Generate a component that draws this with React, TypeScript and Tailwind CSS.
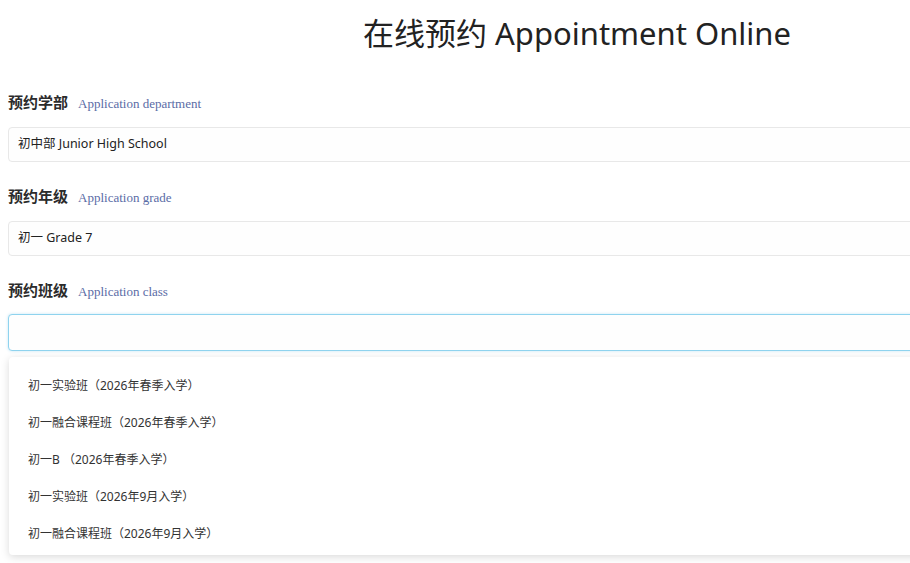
const FONT = 'font-["Noto_Sans","Noto_Sans_CJK_SC",sans-serif]';

const CLASSES = [
    '初一实验班（2026年春季入学）',
    '初一融合课程班（2026年春季入学）',
    '初一B （2026年春季入学）',
    '初一实验班（2026年9月入学）',
    '初一融合课程班（2026年9月入学）',
];

function Label({ cn, en }: { cn: string; en: string }) {
    return (
        <div className="flex h-[22px] items-baseline gap-[10px]">
            <span className={`${FONT} text-[15px] font-bold text-[#2b2b2b]`}>{cn}</span>
            <span className='font-["Liberation_Serif",serif] text-[13px] text-[#5a6ca6]'>{en}</span>
        </div>
    );
}

function Field({ value }: { value: string }) {
    return (
        <div
            className={`${FONT} mt-[14px] flex h-[35px] items-center rounded-[4px] border border-[#e8e8e8] bg-[#fefefe] px-[9px] text-[12.5px] text-[#222]`}
        >
            {value}
        </div>
    );
}

export default function App() {
    return (
        <div className="min-h-[563px] bg-white">
            <div className="ml-2 w-[1138px]">
                <h1
                    className={`${FONT} pt-[13px] text-center text-[31px] leading-[40px] text-[#222]`}
                >
                    在线预约 Appointment Online
                </h1>

                <div className="mt-[38px]">
                    <Label cn="预约学部" en="Application department" />
                    <Field value="初中部 Junior High School" />
                </div>

                <div className="mt-[23px]">
                    <Label cn="预约年级" en="Application grade" />
                    <Field value="初一 Grade 7" />
                </div>

                <div className="mt-[23px]">
                    <Label cn="预约班级" en="Application class" />
                    <div className="relative mt-[13px]">
                        <div className="h-[37px] rounded-[4px] border border-[#8fd3ee] bg-[#fefefe] shadow-[0_0_3px_rgba(120,200,235,0.45)]" />
                        <ul
                            className={`${FONT} absolute left-px right-0 top-[43px] rounded-[4px] bg-white pb-[3px] pt-[10px] text-[12px] text-[#333] shadow-[0_2px_8px_rgba(0,0,0,0.15)]`}
                        >
                            {CLASSES.map((c) => (
                                <li key={c} className="flex h-[37px] items-center px-[19px]">
                                    {c}
                                </li>
                            ))}
                        </ul>
                    </div>
                </div>
            </div>
        </div>
    );
}
